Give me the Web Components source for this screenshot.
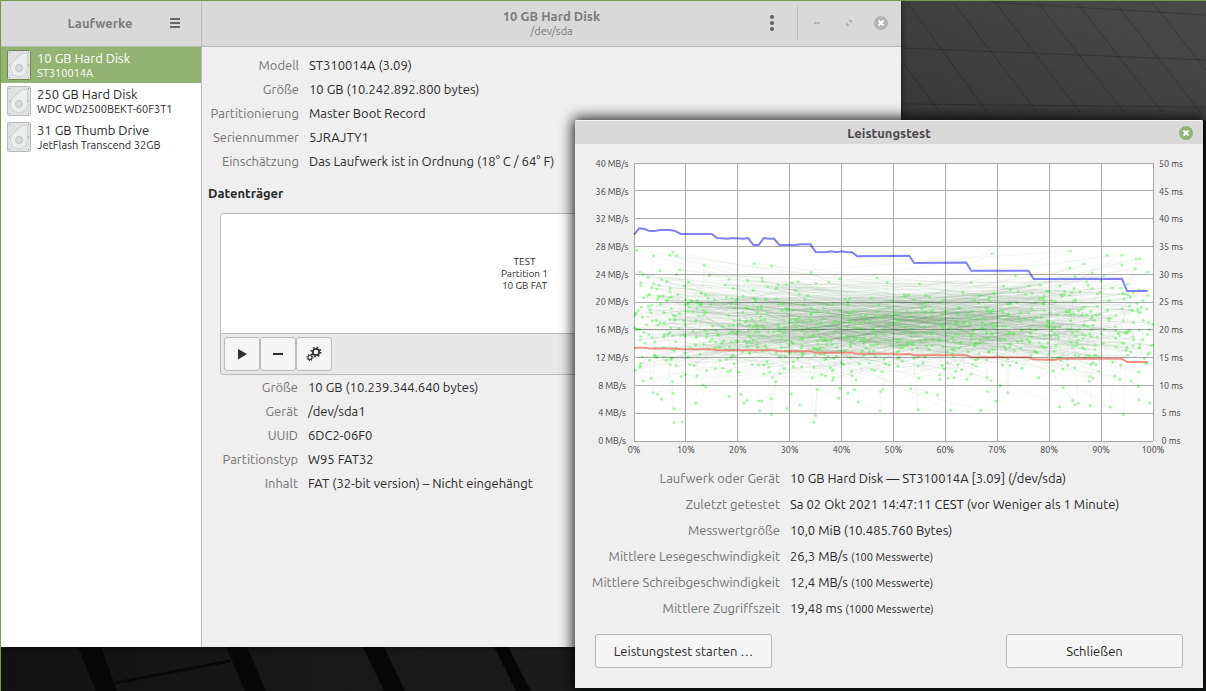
<!DOCTYPE html>
<html lang="de">
<head>
<meta charset="utf-8">
<title>Laufwerke</title>
<style>
html, body {
  height: 100%;
  margin: 0;
}
body {
  font: 13px/18px Ubuntu, "Noto Sans", "Open Sans", sans-serif;
  color: #2a2a2a;
  overflow: hidden;
}
</style>
</head>
<body>
<desk-top>
  <disks-window>
    <drive-item slot="drives" name="10 GB Hard Disk" model="ST310014A" selected></drive-item>
    <drive-item slot="drives" name="250 GB Hard Disk" model="WDC WD2500BEKT-60F3T1"></drive-item>
    <drive-item slot="drives" name="31 GB Thumb Drive" model="JetFlash Transcend 32GB"></drive-item>
    <info-list id="drive-info"></info-list>
    <h2 slot="heading">Datenträger</h2>
    <volume-grid slot="volumes">
      <span>TEST</span>
      <span>Partition 1</span>
      <span>10 GB FAT</span>
    </volume-grid>
    <info-list id="volume-info" slot="volume-info"></info-list>
  </disks-window>
  <benchmark-dialog>
    <benchmark-chart slot="chart"></benchmark-chart>
    <info-list id="benchmark-info" slot="info"></info-list>
    <push-button slot="actions">Leistungstest starten …</push-button>
    <push-button slot="actions">Schließen</push-button>
  </benchmark-dialog>
</desk-top>

<script>
function makeTemplate(html) {
  const template = document.createElement("template");
  template.innerHTML = html;
  return template;
}

class BaseElement extends HTMLElement {
  constructor() {
    super();
    this.attachShadow({ mode: "open" });
    this.shadowRoot.appendChild(
      this.constructor.template.content.cloneNode(true)
    );
  }
}

// Wallpaper and the area the windows float on
class DeskTop extends BaseElement {
  static template = makeTemplate(`
<style>
:host {
  display: block;
  position: relative;
  box-sizing: border-box;
  height: 100%;
  overflow: hidden;
  border-top: 1px solid #759a50;
  border-left: 1px solid #759a50;
  background: #141414;
}
.wallpaper {
  position: absolute;
  inset: 0;
  width: 100%;
  height: 100%;
}
</style>
<svg class="wallpaper" viewBox="1 1 1205 690" preserveAspectRatio="none" aria-hidden="true">
  <defs>
    <linearGradient id="top" x1="0" y1="1" x2="1" y2="0">
      <stop offset="0" stop-color="#363636"/>
      <stop offset="1" stop-color="#4a4a4a"/>
    </linearGradient>
    <linearGradient id="bottom" x1="0" y1="0" x2="1" y2="0">
      <stop offset="0" stop-color="#121212"/>
      <stop offset="1" stop-color="#1c1c1c"/>
    </linearGradient>
  </defs>
  <rect x="900" width="306" height="130" fill="url(#top)"/>
  <g stroke="#000" stroke-opacity=".2" stroke-width="1">
    <path d="M903 48L1206 60M990 2L1206 15M903 104L1206 107"/>
    <path d="M907 2L987 112M953 2L1037 112M995 2L1080 112M1038 3L1124 112M1078 4L1162 112M1118 6L1200 112M1152 2L1206 70M903 63L940 112"/>
  </g>
  <rect y="640" width="600" height="51" fill="url(#bottom)"/>
  <path d="M78 647h23L117 691H96zM226 647h21L266 691H245zM363 647h21L405 691H384zM494 647h14L531 691H516z" fill="#070707"/>
  <path d="M115 683L230 661" stroke="#090909" stroke-width="3"/>
  <path d="M1203 120h3v571h-631v-3h628z" fill="#161a18"/>
</svg>
<slot></slot>
`);
}

class DriveItem extends BaseElement {
  static template = makeTemplate(`
<style>
:host {
  display: block;
}
button {
  display: flex;
  align-items: center;
  gap: 6px;
  width: 100%;
  height: 36px;
  padding: 0 6px;
  border: 0;
  background: none;
  color: inherit;
  font: inherit;
  text-align: left;
}
:host([selected]) button {
  background: #92b372;
  color: #fff;
}
svg {
  flex: none;
  width: 24px;
  height: 30px;
}
.frame {
  stroke: #b9bbbb;
}
:host([selected]) .frame {
  stroke: #6e8756;
}
.name,
.model {
  display: block;
  white-space: nowrap;
}
.name {
  line-height: 16px;
}
.model {
  font-size: 11px;
  line-height: 14px;
}
</style>
<button type="button">
  <svg viewBox="0 0 24 30" aria-hidden="true">
    <rect class="frame" x=".5" y=".5" width="23" height="29" rx="1" fill="#dfe1e3"/>
    <path d="M20.500 3.500v14c0 5.500-4 9-8.500 9s-8.500-3.500-8.500-8.500c0-3 1.500-5.500 3.500-7.500l7-6c1-.8 2-1 3-1z" fill="#ebeeee" stroke="#cdd0d1"/>
    <circle cx="12" cy="18" r="3.500" fill="#d8dbdc" stroke="#bfc3c4"/>
    <path d="M2 2.500h1M21 2.500h1M2 15h1M21 15h1M2 27.500h1M21 27.500h1" stroke="#8f9393"/>
  </svg>
  <span>
    <span class="name"></span>
    <span class="model"></span>
  </span>
</button>
`);

  connectedCallback() {
    this.shadowRoot.querySelector(".name").textContent =
      this.getAttribute("name");
    this.shadowRoot.querySelector(".model").textContent =
      this.getAttribute("model");
  }
}

// Two-column list, set items to [label, value, note?]
class InfoList extends BaseElement {
  static template = makeTemplate(`
<style>
:host {
  display: block;
  --row: 24px;
}
dl {
  display: grid;
  grid-template-columns: var(--label-width) 1fr;
  column-gap: 10px;
  grid-auto-rows: var(--row);
  line-height: var(--row);
  margin: 0;
  white-space: nowrap;
}
dt {
  justify-self: end;
  color: #747474;
}
dd {
  margin: 0;
}
small {
  font-size: 11px;
}
</style>
<dl></dl>
`);

  set items(items) {
    const list = this.shadowRoot.querySelector("dl");
    list.replaceChildren();
    for (const [label, value, note] of items) {
      const dt = document.createElement("dt");
      const dd = document.createElement("dd");
      dt.textContent = label;
      dd.textContent = value;
      if (note) {
        const small = document.createElement("small");
        small.textContent = note;
        dd.append(" ", small);
      }
      list.append(dt, dd);
    }
  }
}

class VolumeGrid extends BaseElement {
  static template = makeTemplate(`
<style>
:host {
  display: block;
  border: 1px solid #b9b9b9;
  border-radius: 3px;
  background: #e8e8e8;
  overflow: hidden;
}
.volume {
  display: flex;
  flex-direction: column;
  align-items: center;
  justify-content: center;
  height: 119px;
  border-bottom: 1px solid #b9b9b9;
  background: #fff;
  font-size: 10px;
  line-height: 12px;
}
.toolbar {
  display: flex;
  padding: 3px;
}
button {
  display: flex;
  align-items: center;
  justify-content: center;
  box-sizing: border-box;
  width: 36px;
  height: 34px;
  padding: 0;
  border: 1px solid #bbb;
  border-radius: 3px;
  background: #f5f5f5;
  color: #303030;
}
svg {
  width: 16px;
  height: 16px;
}
</style>
<div class="volume"><slot></slot></div>
<div class="toolbar">
  <button type="button" aria-label="Einhängen">
    <svg viewBox="0 0 16 16"><path d="M4 3v10.500L13 8z" fill="currentColor"/></svg>
  </button>
  <button type="button" aria-label="Löschen">
    <svg viewBox="0 0 16 16"><path d="M3 7h10v2H3z" fill="currentColor"/></svg>
  </button>
  <button type="button" aria-label="Weitere Optionen">
    <svg viewBox="0 0 16 16" fill="none" stroke="currentColor">
      <circle cx="10" cy="6" r="3.200" stroke-width="1.800"/>
      <circle cx="10" cy="6" r="4.700" stroke-width="1.600" stroke-dasharray="1.600 2.090"/>
      <circle cx="4" cy="11.500" r="2" stroke-width="1.100"/>
      <circle cx="4" cy="11.500" r="3" stroke-width="1.100" stroke-dasharray="1.100 1.256"/>
    </svg>
  </button>
</div>
`);
}

class DisksWindow extends BaseElement {
  static template = makeTemplate(`
<style>
:host {
  position: absolute;
  inset: 0 305px 44px 0;
  display: grid;
  grid-template-columns: 200px 1fr;
  grid-template-rows: 46px 1fr;
  background: #efefef;
  box-shadow: 0 0 6px rgba(0, 0, 0, 0.7);
}
header {
  display: flex;
  align-items: center;
  box-sizing: border-box;
  padding-bottom: 1px;
  border-bottom: 1px solid #b9b9b9;
  background: #d9d9d9;
  color: #7c7c7c;
}
.side-header {
  padding-right: 18px;
}
.side-header h1 {
  flex: 1;
  padding-left: 32px;
}
h1 {
  margin: 0;
  font-size: 13px;
  font-weight: bold;
  line-height: 16px;
  text-align: center;
}
.main-header {
  display: grid;
  grid-template-columns: 1fr auto 1fr;
  border-left: 1px solid #b9b9b9;
}
.title {
  grid-column: 2;
  text-align: center;
}
.title small {
  display: block;
  font-size: 11px;
  line-height: 14px;
}
.controls {
  display: flex;
  align-items: center;
  justify-content: flex-end;
  gap: 16px;
  padding-right: 12px;
}
.separator {
  width: 1px;
  height: 34px;
  margin: 0 -5px 0 1px;
  background: #bfbfbf;
}
header button {
  display: flex;
  width: 16px;
  height: 16px;
  padding: 0;
  border: 0;
  background: none;
  color: #b3b3b3;
}
header .menu {
  color: #666;
}
header svg {
  width: 16px;
  height: 16px;
}
nav {
  background: #fff;
}
main {
  border-left: 1px solid #b9b9b9;
  padding: 6px 6px 0;
  --label-width: 91px;
}
::slotted(h2) {
  margin: 11px 0;
  font-size: 13px;
  line-height: 18px;
}
.volumes {
  margin: 0 66px 0 12px;
}
.volume-info {
  --label-width: 90px;
}
</style>
<header class="side-header">
  <h1>Laufwerke</h1>
  <button class="menu" type="button" aria-label="Menü">
    <svg viewBox="0 0 16 16"><path d="M3 3h10v2H3zM3 7h10v2H3zM3 11h10v2H3z" fill="currentColor"/></svg>
  </button>
</header>
<header class="main-header">
  <div class="title">
    <h1>10 GB Hard Disk</h1>
    <small>/dev/sda</small>
  </div>
  <div class="controls">
    <button class="menu" type="button" aria-label="Laufwerksoptionen">
      <svg viewBox="0 0 16 16" fill="currentColor"><circle cx="8" cy="2" r="2.100"/><circle cx="8" cy="8" r="2.100"/><circle cx="8" cy="14" r="2.100"/></svg>
    </button>
    <span class="separator"></span>
    <button type="button" aria-label="Minimieren">
      <svg viewBox="0 0 16 16"><path d="M5 7h6v2H5z" fill="currentColor"/></svg>
    </button>
    <button type="button" aria-label="Maximieren">
      <svg viewBox="0 0 16 16" fill="currentColor"><path d="M7 5h3.500a.5.5 0 0 1 .5.5V9zM5 7l4 4H5.500a.5.5 0 0 1-.5-.5z"/></svg>
    </button>
    <button type="button" aria-label="Schließen">
      <svg viewBox="0 0 16 16"><circle cx="8" cy="8" r="7" fill="currentColor"/><path d="M5.500 5.500l5 5M10.500 5.500l-5 5" stroke="#fff" stroke-width="2"/></svg>
    </button>
  </div>
</header>
<nav><slot name="drives"></slot></nav>
<main>
  <slot></slot>
  <slot name="heading"></slot>
  <div class="volumes"><slot name="volumes"></slot></div>
  <div class="volume-info"><slot name="volume-info"></slot></div>
</main>
`);
}

class PushButton extends BaseElement {
  static template = makeTemplate(`
<style>
:host {
  display: block;
}
button {
  box-sizing: border-box;
  width: 177px;
  height: 34px;
  padding: 0 8px;
  border: 1px solid #b9b9b9;
  border-radius: 3px;
  background: #f5f5f5;
  color: inherit;
  font: inherit;
  white-space: nowrap;
}
</style>
<button type="button"><slot></slot></button>
`);
}

class BenchmarkDialog extends BaseElement {
  static template = makeTemplate(`
<style>
:host {
  position: absolute;
  inset: 119px 3px auto 574px;
  border-radius: 2px 2px 0 0;
  background: #efefef;
  box-shadow: 0 0 14px 2px rgba(0, 0, 0, 0.9);
}
header {
  display: grid;
  grid-template-columns: 1fr auto 1fr;
  align-items: center;
  height: 24px;
  box-sizing: border-box;
  padding: 0 9px;
  border-top: 1px solid #f5f5f5;
  border-radius: 2px 2px 0 0;
  background: #d9d9d9;
}
h1 {
  grid-column: 2;
  margin: 0;
  color: #4a4a4a;
  font-size: 13px;
  font-weight: 600;
  line-height: 18px;
}
header button {
  display: flex;
  justify-self: end;
  padding: 0;
  border: 0;
  background: none;
}
header svg {
  width: 16px;
  height: 16px;
}
.chart {
  padding: 19px 19px 9px 20px;
}
.info {
  padding: 0 14px 13px;
  --label-width: 191px;
}
footer {
  display: flex;
  justify-content: space-between;
  padding: 0 20px 20px;
}
</style>
<header>
  <h1>Leistungstest</h1>
  <button type="button" aria-label="Schließen">
    <svg viewBox="0 0 16 16"><circle cx="8" cy="8" r="7" fill="#92b372"/><path d="M5.500 5.500l5 5M10.500 5.500l-5 5" stroke="#fff" stroke-width="2"/></svg>
  </button>
</header>
<div class="chart"><slot name="chart"></slot></div>
<div class="info"><slot name="info"></slot></div>
<footer><slot name="actions"></slot></footer>
`);
}

// [percent, MB/s], only the points where the value changes
const READ = [
  [0, 29.7], [1, 30.6], [2, 30.5], [3, 30.2], [4, 30.2], [5, 30.35],
  [7, 30.35], [8, 30.2], [9, 29.8], [15, 29.8], [16, 29.2], [18, 29.1],
  [19, 29.2], [21, 29.1], [22, 29.2], [23, 28.2], [24, 28.2], [25, 29.2],
  [26, 29.1], [27, 29.1], [28, 28.2], [31, 28.2], [32, 28.3], [34, 28.3],
  [35, 27.2], [37, 27.15], [38, 27.3], [39, 27.15], [40, 27.3], [41, 27.15],
  [42, 27.15], [43, 26.6], [53, 26.65], [54, 25.6], [64, 25.7], [65, 24.5],
  [76, 24.5], [77, 23.3], [94, 23.35], [95, 21.6], [99, 21.6],
];
const WRITE = [
  [0, 13.4], [2, 13.4], [3, 13.3], [8, 13.3], [9, 13.2], [15, 13.2],
  [16, 13.05], [27, 13.05], [28, 12.9], [34, 12.9], [35, 12.7], [42, 12.7],
  [43, 12.55], [50, 12.55], [51, 12.45], [53, 12.55], [54, 12.35],
  [64, 12.35], [65, 12.05], [76, 12.05], [77, 11.75], [81, 11.65],
  [82, 11.85], [94, 11.85], [95, 11.35], [99, 11.35],
];
// [percent, ms]
const SLOW_SEEKS = [
  [0.5, 34.3], [3.8, 33.3], [7.5, 34], [6.9, 33.4], [8.2, 33.4],
  [13.5, 31.6], [23.1, 31.9], [26.5, 31.5], [1.1, 30.4], [8.8, 30.8],
  [5, 30.6], [34.1, 30.3], [14.5, 29.8], [18.3, 29.1], [21.9, 28.8],
  [24.8, 28.7], [31.6, 28.7], [37.5, 28.6], [39.6, 29.2], [46.8, 29.3],
  [48.8, 28.5], [69, 33.7], [84.1, 34.2], [91.2, 33.4], [94, 33.4],
  [94, 31.7], [96.8, 32.8], [97.5, 32.8], [86.7, 31.9], [84, 31.1],
  [88.3, 30.2], [96.6, 31], [99, 30.4], [73.5, 29.7], [55, 28.3],
  [65, 28.5],
];
const FAST_SEEKS = [
  [1.8, 10.8], [3.7, 8.7], [4.5, 8.4], [5.3, 7.5], [7.4, 10.7], [7.5, 8.6],
  [7.7, 5.8], [7.7, 3.3], [9.3, 3.4], [11.9, 6.8], [13.2, 10.1],
  [13.8, 9.7], [18.3, 8], [20.6, 8.4], [21.2, 6.8], [21.8, 7.3], [24, 7.2],
  [24.6, 7.2], [24.2, 5.4], [26.5, 7.6], [26.5, 4.7], [29.5, 5.8],
  [27.3, 10.7], [30.3, 8.5], [32, 6.5], [34.6, 3.4], [35, 4.6],
  [35.3, 9.3], [39.4, 7.7], [39.6, 9.5], [41.2, 8.6], [42.5, 9.2],
  [43.2, 7], [47.4, 5.4], [47.5, 8.9], [48, 9.3], [53.3, 9.4],
  [56.4, 8.7], [58.5, 8.3], [54.8, 5.6], [61, 5.5], [66.8, 5.5],
  [68.1, 8.9], [69.7, 7.2], [72, 8.7], [70.6, 10], [82, 6.1], [82.7, 9.6],
  [84.5, 7.3], [85, 6.5], [85.6, 6.8], [87.9, 6.4], [91.8, 6.1],
  [94.3, 4.7], [97.3, 7.4], [99.4, 6.9], [97.2, 9.8], [95.8, 10.8],
];

// Remaining samples: seek time grows with the distance, plus rotation
function accessSamples() {
  let seed = 20211002;
  const random = () => {
    seed = (Math.imul(seed, 1664525) + 1013904223) >>> 0;
    return seed / 4294967296;
  };
  const samples = [];
  let last = 50;
  while (samples.length < 906) {
    const x = random() * 100;
    const seek = Math.sqrt(Math.abs(x - last) / 100);
    const ms = 6 + 16 * seek + 10 * random();
    if (ms > 10.5 && ms < 30) {
      samples.push([x, ms]);
      last = x;
    }
  }
  for (const sample of SLOW_SEEKS) {
    const start = Math.floor(random() * 900);
    const far = samples.findIndex(
      ([x], i) => i > start && Math.abs(x - sample[0]) > 50
    );
    samples.splice(far + 1, 0, sample);
  }
  for (const sample of FAST_SEEKS) {
    const near = samples.findIndex(([x]) => Math.abs(x - sample[0]) < 2);
    samples.splice(near + 1, 0, sample);
  }
  return samples;
}

class BenchmarkChart extends BaseElement {
  static template = makeTemplate(`
<style>
:host {
  display: grid;
  grid-template-columns: 34px 1fr 26px;
  column-gap: 5px;
  color: #3c3c3c;
  font-size: 9px;
  line-height: 12px;
  white-space: nowrap;
}
.axis {
  display: flex;
  justify-content: space-between;
  text-align: center;
}
.speed,
.time {
  flex-direction: column;
  margin: -5px 0 -6px;
}
.percent {
  grid-column: 2;
  margin: 3px -15px 0;
}
.percent span {
  width: 30px;
}
svg {
  display: block;
  width: 100%;
  height: 278px;
  overflow: visible;
}
svg * {
  vector-effect: non-scaling-stroke;
}
.plot {
  fill: #fff;
}
.seek line {
  stroke: #1e641e;
  stroke-opacity: 0.045;
}
.dots path {
  stroke: #50f050;
  stroke-opacity: 0.5;
  stroke-width: 3px;
  stroke-linecap: round;
}
.grid {
  fill: none;
  stroke: #000;
  stroke-opacity: 0.32;
  shape-rendering: crispEdges;
}
.read,
.write {
  fill: none;
  stroke-width: 2px;
}
.read {
  stroke: #8080f8;
}
.write {
  stroke: #f07060;
  stroke-opacity: 0.75;
}
</style>
<div class="axis speed"></div>
<svg viewBox="0 0 100 100" preserveAspectRatio="none" role="img" aria-label="Leistungstest">
  <rect class="plot" width="100" height="100"/>
  <g class="seek"></g>
  <g class="dots"></g>
  <path class="write"/>
  <path class="read"/>
  <path class="grid"/>
</svg>
<div class="axis time"></div>
<div class="axis percent"></div>
`);

  connectedCallback() {
    this._drawAxis(".speed", (i) => `${40 - i * 4} MB/s`);
    this._drawAxis(".time", (i) => `${50 - i * 5} ms`);
    this._drawAxis(".percent", (i) => `${i * 10}%`);
    this._drawSamples();
    this._drawLine(".write", WRITE);
    this._drawLine(".read", READ);

    let grid = "";
    for (let i = 0; i <= 100; i += 10) {
      grid += `M0 ${i}H100M${i} 0V100`;
    }
    this.shadowRoot.querySelector(".grid").setAttribute("d", grid);
  }

  _drawAxis(selector, text) {
    const axis = this.shadowRoot.querySelector(selector);
    for (let i = 0; i <= 10; i++) {
      const label = document.createElement("span");
      label.textContent = text(i);
      axis.append(label);
    }
  }

  _drawLine(selector, points) {
    const d = points.map(([x, speed]) => `${x} ${100 - speed * 2.5}`);
    this.shadowRoot
      .querySelector(selector)
      .setAttribute("d", "M" + d.join("L"));
  }

  _drawSamples() {
    const points = accessSamples().map(([x, ms]) => [x, 100 - ms * 2]);
    let lines = "";
    let dots = "";
    points.forEach(([x, y], i) => {
      if (i > 0) {
        const [x0, y0] = points[i - 1];
        lines += `<line x1="${x0}" y1="${y0}" x2="${x}" y2="${y}"/>`;
      }
      // zero-length stroke keeps the dot round at any chart width
      dots += `<path d="M${x} ${y}h0"/>`;
    });
    this.shadowRoot.querySelector(".seek").innerHTML = lines;
    this.shadowRoot.querySelector(".dots").innerHTML = dots;
  }
}

customElements.define("desk-top", DeskTop);
customElements.define("drive-item", DriveItem);
customElements.define("info-list", InfoList);
customElements.define("volume-grid", VolumeGrid);
customElements.define("disks-window", DisksWindow);
customElements.define("push-button", PushButton);
customElements.define("benchmark-chart", BenchmarkChart);
customElements.define("benchmark-dialog", BenchmarkDialog);

document.querySelector("#drive-info").items = [
  ["Modell", "ST310014A (3.09)"],
  ["Größe", "10 GB (10.242.892.800 bytes)"],
  ["Partitionierung", "Master Boot Record"],
  ["Seriennummer", "5JRAJTY1"],
  ["Einschätzung", "Das Laufwerk ist in Ordnung (18° C / 64° F)"],
];
document.querySelector("#volume-info").items = [
  ["Größe", "10 GB (10.239.344.640 bytes)"],
  ["Gerät", "/dev/sda1"],
  ["UUID", "6DC2-06F0"],
  ["Partitionstyp", "W95 FAT32"],
  ["Inhalt", "FAT (32-bit version) – Nicht eingehängt"],
];
const benchmarkInfo = document.querySelector("#benchmark-info");
benchmarkInfo.style.setProperty("--row", "26px");
benchmarkInfo.items = [
  ["Laufwerk oder Gerät", "10 GB Hard Disk — ST310014A [3.09] (/dev/sda)"],
  ["Zuletzt getestet", "Sa 02 Okt 2021 14:47:11 CEST (vor Weniger als 1 Minute)"],
  ["Messwertgröße", "10,0 MiB (10.485.760 Bytes)"],
  ["Mittlere Lesegeschwindigkeit", "26,3 MB/s", "(100 Messwerte)"],
  ["Mittlere Schreibgeschwindigkeit", "12,4 MB/s", "(100 Messwerte)"],
  ["Mittlere Zugriffszeit", "19,48 ms", "(1000 Messwerte)"],
];
</script>
</body>
</html>
